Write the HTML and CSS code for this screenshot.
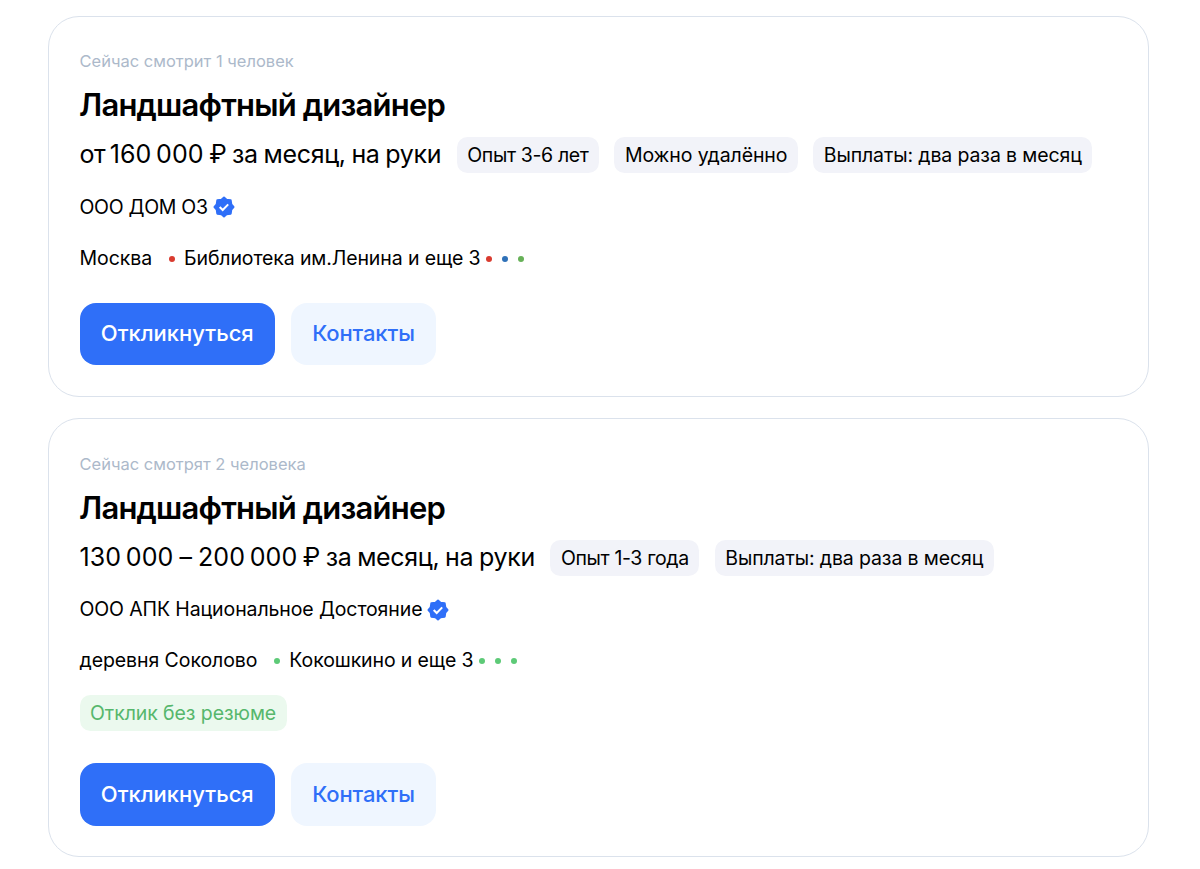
FILE: index.html
```html
<!DOCTYPE html>
<html lang="ru">
<head>
<meta charset="utf-8">
<title>Ландшафтный дизайнер — вакансии</title>
<link rel="stylesheet" href="styles.css">
</head>
<body>
<svg class="sprite" aria-hidden="true">
  <symbol id="verified" viewBox="0 0 22 22">
    <path fill="#2f6ff8" stroke="#2f6ff8" stroke-width="2" stroke-linejoin="round" d="M11 1.500 13.500 3.700 17.700 4.300 18.300 8.500 20.500 11 18.300 13.500 17.700 17.700 13.500 18.300 11 20.500 8.500 18.300 4.300 17.700 3.700 13.500 1.500 11 3.700 8.500 4.300 4.300 8.500 3.700Z"/>
    <path fill="none" stroke="#fff" stroke-width="2" d="m6.700 11 3 3 5.500-5.600"/>
  </symbol>
</svg>
<main class="list">
  <article class="card">
    <p class="viewers">Сейчас смотрит 1 человек</p>
    <h2 class="title">Ландшафтный дизайнер</h2>
    <div class="pay-row">
      <p class="pay"><span class="from">от</span><span class="amount">160&#8201;000</span><span class="period">₽ за месяц, на руки</span></p>
      <span class="chip numeric">Опыт 3-6 лет</span>
      <span class="chip">Можно удалённо</span>
      <span class="chip">Выплаты: два раза в месяц</span>
    </div>
    <p class="company"><span class="caps">ООО ДОМ ОЗ</span><svg class="badge"><use href="#verified"/></svg></p>
    <p class="place"><span class="city">Москва</span><i class="dot red"></i><span class="metro">Библиотека им.Ленина и еще 3</span><span class="dots"><i class="dot red"></i><i class="dot blue"></i><i class="dot green"></i></span></p>
    <div class="actions"><button class="btn primary">Откликнуться</button><button class="btn secondary">Контакты</button></div>
  </article>
  <article class="card">
    <p class="viewers">Сейчас смотрят 2 человека</p>
    <h2 class="title">Ландшафтный дизайнер</h2>
    <div class="pay-row">
      <p class="pay"><span class="amount">130&#8201;000</span><span class="dash">–</span><span class="amount">200&#8201;000</span><span class="period">₽ за месяц, на руки</span></p>
      <span class="chip numeric">Опыт 1-3 года</span>
      <span class="chip">Выплаты: два раза в месяц</span>
    </div>
    <p class="company"><span>ООО АПК Национальное Достояние</span><svg class="badge"><use href="#verified"/></svg></p>
    <p class="place"><span class="city">деревня Соколово</span><i class="dot mint"></i><span class="metro">Кокошкино и еще 3</span><span class="dots"><i class="dot mint"></i><i class="dot mint"></i><i class="dot mint"></i></span></p>
    <span class="chip success">Отклик без резюме</span>
    <div class="actions after-chip"><button class="btn primary">Откликнуться</button><button class="btn secondary">Контакты</button></div>
  </article>
</main>
</body>
</html>
```
FILE: styles.css
```css
* { box-sizing: border-box; }

body {
  margin: 0;
  background: #fff;
  color: #000;
  font-family: Inter, "Noto Sans", sans-serif;
  font-size: 19.5px;
  white-space: nowrap;
}

p, h2 { margin: 0; }

.sprite { display: none; }

.list {
  display: flex;
  flex-direction: column;
  gap: 21.5px;
  padding: 15.5px 51px 0 48px;
}

.card {
  padding: 30.5px;
  border: 1px solid #dbe2ec;
  border-radius: 31px;
}

.viewers {
  height: 28px;
  line-height: 28px;
  font-size: 16.5px;
  letter-spacing: 0;
  color: #acb9ca;
}

.title {
  height: 44px;
  margin-top: 8px;
  margin-left: -0.5px;
  line-height: 44px;
  font-size: 31px;
  font-weight: 580;
  letter-spacing: -0.8px;
}

.pay-row {
  display: flex;
  align-items: center;
  gap: 15.5px;
  height: 36px;
  margin-top: 10px;
}

.pay {
  display: flex;
  line-height: 36px;
  font-size: 25px;
  margin-top: -2px;
}

.from { margin-right: 4.5px; letter-spacing: -0.5px; }
.amount { margin-right: 6px; letter-spacing: 0.1px; word-spacing: -1.2px; }
.amount + .period { margin-left: -0.5px; }
.dash { width: 18.5px; }
.period { letter-spacing: -0.32px; word-spacing: -1px; }

.chip {
  display: inline-block;
  height: 36px;
  padding: 0 10.5px;
  border-radius: 10.5px;
  line-height: 36px;
  letter-spacing: -0.12px;
  background: #f2f3f9;
}

.numeric { letter-spacing: -0.36px; }

.success {
  display: block;
  width: max-content;
  margin-top: 18.5px;
  letter-spacing: -0.08px;
  color: #56b76c;
  background: #ebf9ee;
}

.company, .place {
  display: flex;
  align-items: center;
  height: 32px;
  line-height: 32px;
  letter-spacing: -0.11px;
}

.company { margin-top: 17.5px; }
.caps { letter-spacing: -0.3px; }
.badge { width: 22px; height: 22px; margin-top: 1px; margin-left: 5px; }

.place { margin-top: 19px; }
.city { margin-right: 17px; letter-spacing: -0.08px; }
.metro { margin-left: 9px; letter-spacing: -0.12px; }
.dots { display: flex; gap: 10px; margin-left: 5.5px; }
.dot { width: 6px; height: 6px; border-radius: 50%; margin-top: 2px; }
.red { background: #d93b2f; }
.blue { background: #2f71b8; }
.green { background: #67b158; }
.mint { background: #5dca77; }

.actions {
  display: flex;
  gap: 16px;
  margin-top: 29px;
}

.place + .success { margin-top: 19px; }
.after-chip { margin-top: 32px; }

.btn {
  height: 62.5px;
  padding: 0;
  border: 0;
  border-radius: 16px;
  font-family: inherit;
  font-size: 22px;
  font-weight: 500;
  line-height: 61px;
}

.primary { width: 195.5px; color: #fff; background: #2f6ff8; letter-spacing: 0; }
.secondary { width: 145px; color: #2f6ff8; background: #eff6ff; letter-spacing: -0.1px; }
```
